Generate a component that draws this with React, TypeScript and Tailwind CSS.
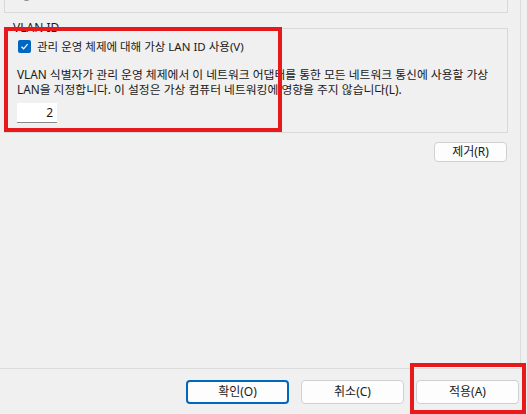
import React from "react";

function Btn({ children, primary = false, className = "" }: { children: React.ReactNode; primary?: boolean; className?: string }) {
  return (
    <div
      className={
        "flex items-center justify-center rounded-[4px] bg-[#fdfdfd] text-[12px] text-[#1a1a1a] " +
        (primary ? "border-2 border-[#0067c0]" : "border border-[#d0d0d0]") +
        " " +
        className
      }
    >
      {children}
    </div>
  );
}

export default function App() {
  return (
    <div className="relative h-[414px] w-[527px] overflow-hidden bg-[#f0f0f0] font-['Noto_Sans','Noto_Sans_CJK_KR',sans-serif] text-[#1a1a1a]">
      {/* main page area */}
      <div className="flex h-[369px] w-[521px] flex-col border-r border-b border-[#dcdcdc]">
        {/* previous group (cut off) */}
        <div className="relative ml-[4px] h-[13px] w-[504px] border-x border-b border-[#d9d9d9]">
          <div className="absolute left-[17px] top-[-8px] h-[9px] w-[9px] rounded-full bg-[#8a8a8a]" />
        </div>

        {/* VLAN ID group */}
        <div className="relative ml-[4px] mt-[15px] w-[504px] border border-[#d9d9d9] px-[12px] pb-[9px] pt-[11px]">
          <span className="absolute left-[6px] top-[-9px] bg-[#f0f0f0] px-[2px] text-[12px] leading-[15px]">VLAN ID</span>
          <div className="flex items-center gap-[6px] pl-[1px]">
            <div className="flex h-[13px] w-[13px] items-center justify-center rounded-[2px] bg-[#0067c0]">
              <svg width="9" height="9" viewBox="0 0 9 9">
                <path d="M1.5 4.8 L3.6 6.8 L7.6 2.2" fill="none" stroke="#ffffff" strokeWidth="1.2" />
              </svg>
            </div>
            <span className="text-[11.5px] leading-[13px]">관리 운영 체제에 대해 가상 LAN ID 사용(V)</span>
          </div>
          <p className="mt-[14px] text-[11.8px] leading-[15px]">
            VLAN 식별자가 관리 운영 체제에서 이 네트워크 어댑터를 통한 모든 네트워크 통신에 사용할 가상
            <br />
            LAN을 지정합니다. 이 설정은 가상 컴퓨터 네트워킹에 영향을 주지 않습니다(L).
          </p>
          <div className="mt-[6px] flex h-[20px] w-[40px] items-center justify-end border-b border-[#8a8a8a] bg-white pr-[4px] text-[12px]">
            2
          </div>
        </div>

        <div className="mt-[9px] flex justify-end pr-[13px]">
          <Btn className="h-[20px] w-[73px]">제거(R)</Btn>
        </div>
      </div>

      {/* bottom buttons */}
      <div className="flex justify-end gap-[12px] pr-[8px] pt-[11px]">
        <Btn primary className="h-[24px] w-[103px]">확인(O)</Btn>
        <Btn className="h-[24px] w-[103px]">취소(C)</Btn>
        <Btn className="h-[24px] w-[103px]">적용(A)</Btn>
      </div>

      {/* annotation boxes */}
      <div className="pointer-events-none absolute left-[4px] top-[27px] h-[105px] w-[278px] border-4 border-[#e8191b]" />
      <div className="pointer-events-none absolute left-[410px] top-[363px] h-[51px] w-[116px] border-4 border-[#e8191b]" />
    </div>
  );
}
